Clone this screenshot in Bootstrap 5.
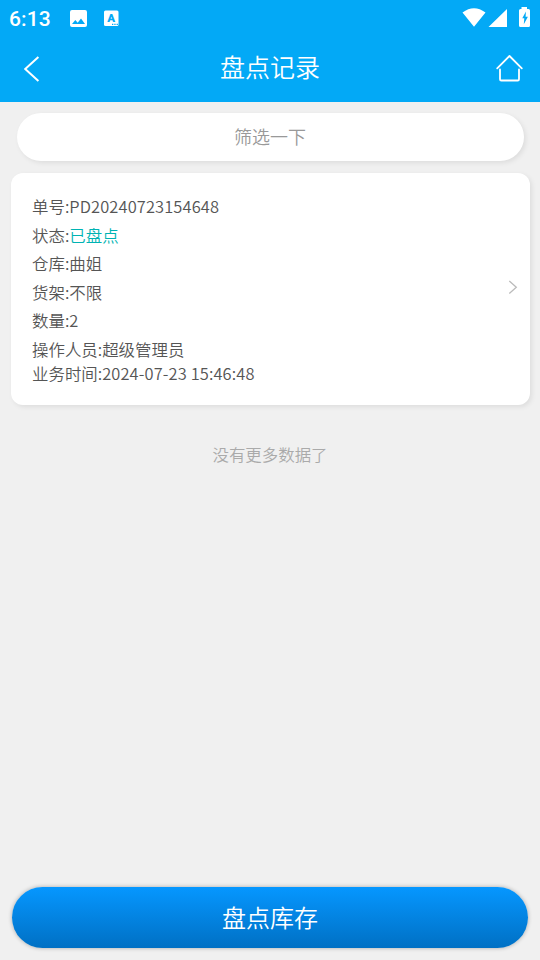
<!DOCTYPE html>
<html lang="zh-CN">
<head>
<meta charset="utf-8">
<meta name="viewport" content="width=device-width, initial-scale=1">
<title>盘点记录</title>
<link href="https://cdn.jsdelivr.net/npm/bootstrap@5.3.0/dist/css/bootstrap.min.css" rel="stylesheet">
<style>
body{background:#f0f0f0;font-family:"Noto Sans CJK SC",sans-serif;font-weight:350;color:#555}
.app-head{background:#03a9f6;height:102px;color:#fff}
.status-bar{height:36px;padding:0 9px}
.clock{font:500 21px/36px Roboto,sans-serif;width:60px;letter-spacing:.1px;padding-top:1px}
.title-bar{height:66px;padding:0 16px 0 24px}
.page-title{font-size:25px;line-height:60px;margin-left:-8px}
.side{width:28px}
.filter-pill{height:48px;margin:11px 16px 0 17px;padding-right:1px;background:#fff;color:#999;font-size:18px;line-height:46px;box-shadow:2px 2px 5px rgba(0,0,0,.08)}
.record{height:232px;margin:12px 10px 0 11px;padding:19px 12px 0 21px;border-radius:12px;background:#fff;box-shadow:2px 2px 5px rgba(0,0,0,.08);font-size:16.45px}
.field{line-height:28.5px}
.field-last{line-height:20px}
.num{letter-spacing:.12px}
.done{color:#00b3b3}
.no-more{color:#aaa;font-size:16.45px;line-height:24px;margin-top:37px}
.submit,.submit:hover{height:61px;margin:0 12px 12px;color:#fff;font-size:24px;font-weight:350;line-height:60px;padding:0 0 1px;border:0;background:linear-gradient(#0697ff,#0070c4);box-shadow:0 0 4px rgba(0,0,0,.3)}
.glyph-a{font:900 11.5px Roboto,sans-serif}
svg{display:block}
</style>
</head>
<body>
<div class="d-flex flex-column vh-100">
<header class="app-head flex-shrink-0">
  <div class="status-bar d-flex">
    <span class="clock">6:13</span>
    <svg width="60" height="36" viewBox="69 0 60 36">
      <path fill="#fff" fill-rule="evenodd" d="M72 10h13q2 0 2 2v13q0 2-2 2H72q-2 0-2-2V12q0-2 2-2zm0 14h13l-4-5.500-3.300 4.200-2.400-2.700z"/>
      <rect x="104" y="10.500" width="14.500" height="15.500" rx="1.500" fill="#fff"/>
      <text class="glyph-a" x="111.200" y="22" text-anchor="middle" fill="#03a9f6">A</text>
      <path stroke="#03a9f6" stroke-width="1.300" stroke-dasharray="1.300 1" d="M112 24.300h6"/>
    </svg>
    <svg class="ms-auto" width="70" height="36" viewBox="461 0 70 36">
      <path fill="#fff" d="M462.500 12.500Q474 4 485.500 12.500L474 26.800zM507 9v18h-18.500zM521.500 9v-2h5.500v2h1.500q1.500 0 1.500 1.500v15q0 1.500-1.500 1.500h-8q-1.500 0-1.500-1.500v-15q0-1.500 1.500-1.500z"/>
      <path fill="#03a9f6" d="M525.900 11.500l-3.600 6.800h2l-.5 6 4.100-7.500h-2.300z"/>
    </svg>
  </div>
  <div class="title-bar d-flex justify-content-between">
    <svg class="side" width="28" height="66" viewBox="24 36 28 66"><path fill="none" stroke="#fff" stroke-width="2" d="M38.400 56.900L25.200 69l13.200 12.100"/></svg>
    <span class="page-title">盘点记录</span>
    <svg class="side" width="28" height="66" viewBox="496 36 28 66"><path fill="none" stroke="#fff" stroke-width="1.800" stroke-linecap="round" stroke-linejoin="round" d="M497.200 68.300l12.300-12.300 12.300 12.300M500 69.500v9.700q0 1.300 1.300 1.300h16.400q1.300 0 1.300-1.300v-9.700"/></svg>
  </div>
</header>
<main class="flex-grow-1">
  <div class="filter-pill rounded-pill text-center">筛选一下</div>
  <div class="record d-flex justify-content-between">
    <div>
      <div class="field">单号:<span class="num">PD20240723154648</span></div>
      <div class="field">状态:<span class="done">已盘点</span></div>
      <div class="field">仓库:曲姐</div>
      <div class="field">货架:不限</div>
      <div class="field">数量:2</div>
      <div class="field">操作人员:超级管理员</div>
      <div class="field-last">业务时间:<span class="num">2024-07-23 15:46:48</span></div>
    </div>
    <svg width="10" height="190" viewBox="508 192 10 190"><path fill="none" stroke="#bbb" stroke-width="1.300" d="M509.300 281l7 6.200-7 6.200"/></svg>
  </div>
  <div class="no-more text-center">没有更多数据了</div>
</main>
<button type="button" class="submit btn rounded-pill flex-shrink-0">盘点库存</button>
</div>
<script src="https://cdn.jsdelivr.net/npm/bootstrap@5.3.0/dist/js/bootstrap.bundle.min.js"></script>
</body>
</html>
